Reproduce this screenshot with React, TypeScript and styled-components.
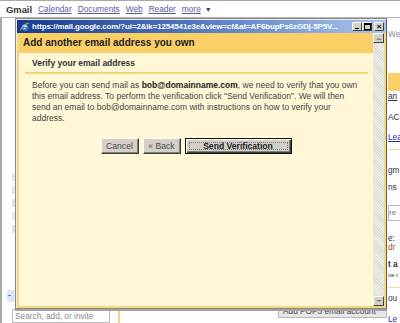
import React from 'react';
import styled, {createGlobalStyle} from 'styled-components';

/** Interfaces */
interface IGap {
    top?: number;
}
interface IBtn {
    w: number;
    primary?: boolean;
}
interface ISnip {
    top: number;
    tone?: 'text' | 'link' | 'brown' | 'gray' | 'under';
    bold?: boolean;
    size?: number;
}

const COLORS = {
    YELLOW: '#f9cf66',
    FRAME: '#f6d67e',
    CREAM: '#fff7d6',
    TEXT: '#454545',
    LINK: '#5b5b9c',
    BTN: '#d4d0c8',
};

/** Styles */
const GlobalStyle = createGlobalStyle`
    body {
        margin: 0;
        font-family: "Liberation Sans", Arial, sans-serif;
        background: #fff;
    }
`;

const Screen = styled('div')`
    position: relative;
    width: 400px;
    height: 323px;
    overflow: hidden;
    background: #fff;
    border-top: 1px solid #a8a8a8;
    box-sizing: border-box;
`;

const TopNav = styled('div')`
    display: flex;
    align-items: center;
    height: 16px;
    padding-left: 6px;
    gap: 5px;
    border-bottom: 1px solid #b4b4b4;
    font-size: 8.3px;
    .brand {
        font-weight: bold;
        font-size: 9.4px;
        color: #333;
        margin-right: 1px;
    }
    a {
        color: ${COLORS.LINK};
        text-decoration: underline;
        margin-right: 1px;
    }
    .arrow {
        color: #2a3f8f;
        font-size: 7px;
        margin-left: -2px;
    }
`;

const PageBody = styled('div')`
    display: grid;
    grid-template-columns: 118px 269px 13px;
    height: 306px;
`;

const LeftCol = styled('div')`
    display: flex;
    flex-direction: column;
    border-left: 2px solid #a9a9a9;
    padding-top: 150px;
    .faded {
        width: 4px;
        height: 8px;
        margin: 5px 0 0 10px;
        background: #e6e6e6;
    }
    .chatHead {
        margin-top: auto;
        margin-left: 5px;
        width: 10px;
        height: 12px;
        background: #dde8f6;
        font-size: 9px;
        line-height: 10px;
        color: #333;
        text-indent: 1px;
    }
    .search {
        margin: 7px 0 1px 10px;
        width: 94px;
        height: 12px;
        border: 1px solid #b9b9b9;
        font-size: 8.3px;
        line-height: 12px;
        color: #8a8a8a;
        padding-left: 2px;
    }
`;

const MainCol = styled('div')`
    display: flex;
    flex-direction: column;
    border-left: 2px solid ${COLORS.FRAME};
    .pop {
        margin-top: auto;
        margin-left: 158px;
        margin-bottom: 6px;
        height: 11px;
        padding: 0 4px;
        background: #e6e6e6;
        border: 1px solid #b8b8b8;
        font-size: 8.3px;
        line-height: 11px;
        color: #444;
        white-space: nowrap;
        overflow: hidden;
    }
`;

const RightCol = styled('div')`
    display: flex;
    flex-direction: column;
    overflow: hidden;
    padding-left: 1px;
    .bar {
        margin-top: 34px;
        height: 19px;
        background: ${COLORS.YELLOW};
    }
    .rule {
        margin-top: 7px;
        height: 1px;
        background: #f0dc9c;
    }
    .box {
        margin-top: 13px;
        height: 14px;
        border: 1px solid #b8b8b8;
        border-right: none;
        font-size: 8px;
        line-height: 14px;
        color: #777;
        white-space: nowrap;
    }
`;

const Snip = styled('div')<ISnip>`
    margin-top: ${({top}) => top}px;
    font-size: ${({size}) => size || 8.3}px;
    line-height: 9px;
    white-space: nowrap;
    font-weight: ${({bold}) => bold ? 'bold' : 'normal'};
    color: ${({tone}) => tone === 'link' ? '#2b2bb8' : tone === 'brown' ? '#a0522d' : tone === 'gray' ? '#8a8a8a' : '#333'};
    text-decoration: ${({tone}) => tone === 'link' || tone === 'under' ? 'underline' : 'none'};
`;

const Popup = styled('div')`
    position: absolute;
    left: 15px;
    top: 17px;
    width: 372px;
    height: 291px;
    box-sizing: border-box;
    border: 1px solid #8a8a8a;
    border-right-color: #5e5e5e;
    padding: 1px 0 0 1px;
    background: #ecebe6;
    box-shadow: 0 2px 0 #a3a3a3;
    display: flex;
    flex-direction: column;
`;

const TitleBar = styled('div')`
    display: flex;
    align-items: center;
    gap: 2px;
    height: 13px;
    padding: 0 2px 0 3px;
    background: linear-gradient(to right, #163a8c 0%, #4e74bc 45%, #a9c6ec 100%);
    .title {
        flex: 1;
        color: #fff;
        font-weight: bold;
        font-size: 7.9px;
        white-space: nowrap;
        overflow: hidden;
        letter-spacing: -0.1px;
    }
    .controls {
        display: flex;
        gap: 0;
    }
`;

const WinBtn = styled('div')<IGap>`
    display: flex;
    align-items: center;
    justify-content: center;
    width: 10px;
    height: 9px;
    margin-left: ${({top}) => top || 0}px;
    box-sizing: border-box;
    background: ${COLORS.BTN};
    border-top: 1px solid #fff;
    border-left: 1px solid #fff;
    border-right: 1px solid #404040;
    border-bottom: 1px solid #404040;
    font-size: 8px;
    line-height: 7px;
    color: #000;
    font-weight: bold;
    .min {
        width: 4px;
        height: 1px;
        background: #000;
        margin-top: 4px;
    }
    .max {
        width: 5px;
        height: 4px;
        border: 1px solid #000;
        border-top-width: 2px;
    }
`;

const Client = styled('div')`
    flex: 1;
    display: grid;
    grid-template-columns: 1fr 11px;
    border: 2px solid ${COLORS.FRAME};
    border-top: none;
    background: ${COLORS.CREAM};
    min-height: 0;
`;

const Page = styled('div')`
    display: flex;
    flex-direction: column;
`;

const Header = styled('div')`
    height: 20px;
    background: ${COLORS.YELLOW};
    font-size: 10px;
    font-weight: bold;
    line-height: 20px;
    padding-left: 4px;
    color: #222;
`;

const Panel = styled('div')`
    margin: 5px 5px 0 6px;
    .sectionTitle {
        font-size: 8.5px;
        font-weight: bold;
        line-height: 11px;
        color: #333;
        padding: 0 0 3px 7px;
        border-bottom: 2px solid #f3d578;
    }
    .text {
        margin-top: 6px;
        padding-left: 7px;
        font-size: 8.5px;
        line-height: 11px;
        color: ${COLORS.TEXT};
        white-space: nowrap;
        b {
            color: #222;
        }
    }
`;

const Actions = styled('div')`
    display: flex;
    justify-content: center;
    gap: 4px;
    margin-top: 14px;
`;

const Btn = styled('button')<IBtn>`
    position: relative;
    width: ${({w}) => w}px;
    height: 16px;
    padding: 0;
    box-sizing: border-box;
    font-family: inherit;
    font-size: 8.6px;
    font-weight: ${({primary}) => primary ? 'bold' : 'normal'};
    color: ${({primary}) => primary ? '#1a1a1a' : '#4a4a4a'};
    background: ${COLORS.BTN};
    border: 1px solid;
    border-color: ${({primary}) => primary ? '#111' : '#fff #404040 #404040 #fff'};
    box-shadow: ${({primary}) => primary
        ? 'inset 1px 1px #fff, inset -1px -1px #404040, inset -2px -2px #808080'
        : 'inset -1px -1px #808080'};
    &::after {
        content: '';
        display: ${({primary}) => primary ? 'block' : 'none'};
        position: absolute;
        inset: 3px;
        border: 1px dotted #777;
    }
`;

const Scroll = styled('div')`
    display: flex;
    flex-direction: column;
    justify-content: space-between;
    background: repeating-linear-gradient(45deg, #eeede8 0 1px, #dedcd6 1px 2px);
    .arrowBtn {
        display: flex;
        align-items: center;
        justify-content: center;
        height: 10px;
        box-sizing: border-box;
        background: ${COLORS.BTN};
        border-top: 1px solid #fff;
        border-left: 1px solid #fff;
        border-right: 1px solid #404040;
        border-bottom: 1px solid #404040;
    }
    .up {
        margin-top: 1px;
        border-left: 3px solid transparent;
        border-right: 3px solid transparent;
        border-bottom: 2px solid #808080;
    }
    .down {
        border-left: 3px solid transparent;
        border-right: 3px solid transparent;
        border-top: 2px solid #808080;
    }
`;

const IeIcon = () => (
    <svg width="10" height="10" viewBox="0 0 10 10">
        <circle cx="5" cy="5.3" r="3.6" fill="#2f7fd8"/>
        <circle cx="5" cy="5.3" r="2" fill="#ffffff"/>
        <rect x="2.6" y="5" width="5" height="1.1" fill="#2f7fd8"/>
        <rect x="5.6" y="5.8" width="3" height="1.4" fill="#2f7fd8"/>
        <path d="M0.8 8.6 C0.2 6.5 4.5 1.5 9 1.2" stroke="#f0b030" strokeWidth="1" fill="none"/>
    </svg>
);

/**
 * Окно добавления адреса почты поверх страницы настроек
 */
const App: React.FC = () => {
    return <>
        <GlobalStyle/>
        <Screen>
            <TopNav>
                <span className="brand">Gmail</span>
                <a>Calendar</a>
                <a>Documents</a>
                <a>Web</a>
                <a>Reader</a>
                <a>more</a>
                <span className="arrow">▼</span>
            </TopNav>
            <PageBody>
                <LeftCol>
                    <div className="faded"/>
                    <div className="faded"/>
                    <div className="faded"/>
                    <div className="faded"/>
                    <div className="faded"/>
                    <div className="chatHead">-</div>
                    <div className="search">Search, add, or invite</div>
                </LeftCol>
                <MainCol>
                    <div className="pop">Add POP3 email account</div>
                </MainCol>
                <RightCol>
                    <Snip top={12} tone="gray">Wel</Snip>
                    <div className="bar"/>
                    <Snip top={1} tone="under">an</Snip>
                    <Snip top={12}>AC</Snip>
                    <Snip top={11} tone="link">Lea</Snip>
                    <div className="rule"/>
                    <Snip top={16}>gm</Snip>
                    <Snip top={8}>ns</Snip>
                    <div className="box">re</div>
                    <Snip top={13}>e:</Snip>
                    <Snip top={0} tone="brown">dr</Snip>
                    <Snip top={8} bold>t a</Snip>
                    <Snip top={2} size={6}>ne t</Snip>
                    <div className="rule"/>
                    <Snip top={6}>ou</Snip>
                    <Snip top={12} tone="link">Le</Snip>
                </RightCol>
            </PageBody>

            <Popup>
                <TitleBar>
                    <IeIcon/>
                    <div className="title">https://mail.google.com/?ui=2&amp;ik=1254541e3e&amp;view=cf&amp;at=AF6bupPs6zGDj-5P5V...</div>
                    <div className="controls">
                        <WinBtn><div className="min"/></WinBtn>
                        <WinBtn><div className="max"/></WinBtn>
                        <WinBtn top={2}>×</WinBtn>
                    </div>
                </TitleBar>
                <Client>
                    <Page>
                        <Header>Add another email address you own</Header>
                        <Panel>
                            <div className="sectionTitle">Verify your email address</div>
                            <div className="text">
                                Before you can send mail as <b>bob@domainname.com</b>, we need to verify that you own<br/>
                                this email address. To perform the verification click "Send Verification". We will then<br/>
                                send an email to bob@domainname.com with instructions on how to verify your<br/>
                                address.
                            </div>
                        </Panel>
                        <Actions>
                            <Btn w={38}>Cancel</Btn>
                            <Btn w={38}>« Back</Btn>
                            <Btn w={107} primary>Send Verification</Btn>
                        </Actions>
                    </Page>
                    <Scroll>
                        <div className="arrowBtn"><div className="up"/></div>
                        <div className="arrowBtn"><div className="down"/></div>
                    </Scroll>
                </Client>
            </Popup>
        </Screen>
    </>;
};

export default App;
